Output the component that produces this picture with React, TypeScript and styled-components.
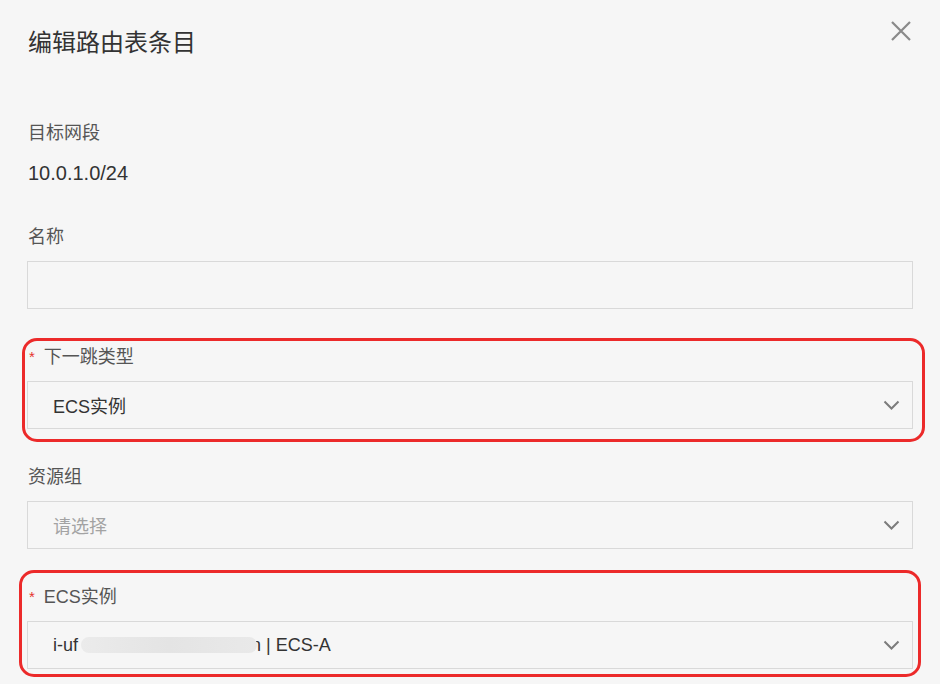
import React from "react";
import styled, { createGlobalStyle } from "styled-components";

const GlobalStyle = createGlobalStyle`
  html, body {
    margin: 0;
    padding: 0;
    background: #f6f6f6;
  }
  body {
    font-family: "Liberation Sans", "Noto Sans CJK SC", sans-serif;
    color: #333;
  }
`;

const Panel = styled.div`
  width: 940px;
  height: 684px;
  box-sizing: border-box;
  padding: 25px 27px 0 27px;
  background: #f6f6f6;
  overflow: hidden;
`;

const Header = styled.div`
  display: flex;
  align-items: flex-start;
  justify-content: space-between;
  height: 36px;
`;

const Title = styled.h2`
  margin: 0 0 0 1px;
  font-size: 24px;
  line-height: 36px;
  font-weight: 400;
  color: #333;
`;

const CloseButton = styled.button`
  display: flex;
  align-items: center;
  justify-content: center;
  width: 24px;
  height: 24px;
  margin: -6px 0 0 0;
  padding: 0;
  border: none;
  background: none;
  cursor: pointer;
`;

const StaticField = styled.div`
  margin-top: 60px;
  margin-bottom: 38px;
`;

const Label = styled.div`
  font-size: 18px;
  line-height: 24px;
  color: #555;
  padding-left: 1px;
  display: flex;
  align-items: center;
`;

const Required = styled.span`
  color: #e5322d;
  font-size: 15px;
  margin: 0 9px 0 1px;
`;

const Value = styled.div`
  margin-top: 14px;
  padding-left: 1px;
  font-size: 20px;
  line-height: 28px;
  color: #333;
`;

const FormItem = styled.div<{ $mark?: [number, number, number, number] }>`
  position: relative;
  margin-bottom: 36px;

  ${({ $mark }) =>
    $mark &&
    `
    &::after {
      content: "";
      position: absolute;
      top: ${-$mark[0]}px;
      right: ${-$mark[1]}px;
      bottom: ${-$mark[2]}px;
      left: ${-$mark[3]}px;
      border: 3px solid #ec2a2a;
      border-radius: 15px;
      pointer-events: none;
    }
  `}
`;

const Field = styled.div`
  margin-top: 12px;
  height: 48px;
  box-sizing: border-box;
  border: 1px solid #d9d9d9;
  display: flex;
  align-items: center;
  justify-content: space-between;
  padding: 0 12px 0 25px;
  font-size: 18px;
`;

const FieldText = styled.span<{ $placeholder?: boolean }>`
  color: ${({ $placeholder }) => ($placeholder ? "#a3a3a3" : "#333")};
  display: flex;
  align-items: center;
  white-space: nowrap;
`;

const Redacted = styled.span`
  position: relative;
  z-index: 1;
  display: inline-block;
  width: 176px;
  height: 16px;
  margin: 0 -6px 0 3px;
  border-radius: 8px;
  background: linear-gradient(90deg, #ebebeb, #e4e4e4 50%, #e9e9e9);
`;

const Chevron = () => (
  <svg width="17" height="10" viewBox="0 0 17 10">
    <polyline
      points="1.5,1.5 8.5,8.5 15.5,1.5"
      fill="none"
      stroke="#7c7c7c"
      strokeWidth="2"
    />
  </svg>
);

export default function App() {
  return (
    <>
      <GlobalStyle />
      <Panel>
        <Header>
          <Title>编辑路由表条目</Title>
          <CloseButton aria-label="close">
            <svg width="22" height="22" viewBox="0 0 22 22">
              <path
                d="M2 2 L20 20 M20 2 L2 20"
                stroke="#8a8a8a"
                strokeWidth="2.2"
              />
            </svg>
          </CloseButton>
        </Header>

        <StaticField>
          <Label>目标网段</Label>
          <Value>10.0.1.0/24</Value>
        </StaticField>

        <FormItem>
          <Label>名称</Label>
          <Field />
        </FormItem>

        <FormItem $mark={[7, 12, 13, 5]}>
          <Label>
            <Required>*</Required>下一跳类型
          </Label>
          <Field>
            <FieldText>ECS实例</FieldText>
            <Chevron />
          </Field>
        </FormItem>

        <FormItem>
          <Label>资源组</Label>
          <Field>
            <FieldText $placeholder>请选择</FieldText>
            <Chevron />
          </Field>
        </FormItem>

        <FormItem $mark={[15, 8, 8, 8]}>
          <Label>
            <Required>*</Required>ECS实例
          </Label>
          <Field>
            <FieldText>
              i-uf
              <Redacted />
              n | ECS-A
            </FieldText>
            <Chevron />
          </Field>
        </FormItem>
      </Panel>
    </>
  );
}
